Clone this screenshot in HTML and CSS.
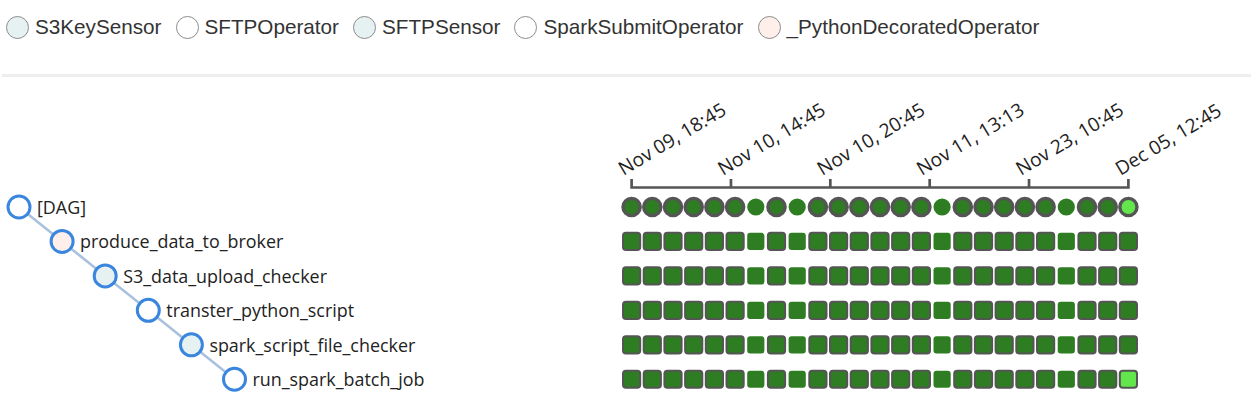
FILE: index.html
```html
<!DOCTYPE html>
<html lang="en">
<head>
  <meta charset="UTF-8">
  <title>Tree View</title>
  <link rel="stylesheet" href="styles.css">
</head>
<body>
  <div class="legend">
    <span class="legend-item"><span class="swatch sensor"></span>S3KeySensor</span>
    <span class="legend-item"><span class="swatch plain"></span>SFTPOperator</span>
    <span class="legend-item"><span class="swatch sensor"></span>SFTPSensor</span>
    <span class="legend-item"><span class="swatch plain"></span>SparkSubmitOperator</span>
    <span class="legend-item"><span class="swatch decorated"></span>_PythonDecoratedOperator</span>
  </div>
  <div class="divider"></div>

  <svg class="tree" width="1251" height="338">
    <g id="chart" transform="translate(0,-77)"></g>
  </svg>

  <script src="script.js"></script>
</body>
</html>
```

FILE: styles.css
```css
body {
  margin: 0;
  padding: 0;
  background: #fff;
  color: #333;
  font-family: "Liberation Sans", Arial, sans-serif;
}

.legend {
  display: flex;
  align-items: center;
  height: 24px;
  padding: 15px 6px 0 6px;
  margin-bottom: 35px;
  font-size: 20.7px;
  line-height: 24px;
  color: #333;
}

.legend-item {
  display: flex;
  align-items: center;
  margin-right: 14px;
}

.swatch {
  display: inline-block;
  box-sizing: border-box;
  width: 23px;
  height: 23px;
  margin-right: 6px;
  border: 1px solid #8c8c8c;
  border-radius: 50%;
  background: #fff;
}

.swatch.sensor { background: #e6f1f2; }
.swatch.decorated { background: #ffefeb; }

.divider {
  height: 3px;
  margin-left: 2px;
  background: #eeeeee;
}

.tree {
  display: block;
}

/* tree */
.link {
  fill: none;
  stroke: #a9c1de;
  stroke-width: 2.6;
}

.node {
  stroke: #3a86de;
  stroke-width: 3;
}

.node-label {
  font-family: "Open Sans", sans-serif;
  font-size: 17.9px;
  fill: #222;
  dominant-baseline: central;
}

/* axis */
.axis-line {
  fill: none;
  stroke: #555;
  stroke-width: 2.7;
}

.tick-label {
  font-family: "Open Sans", sans-serif;
  font-size: 19.2px;
  fill: #222;
}

/* runs and task instances */
.run, .ti {
  stroke: #555;
  stroke-width: 3.4;
}

.ti {
  stroke-width: 2;
}

.run.manual, .ti.manual {
  stroke-width: 0;
}

.success { fill: #2e7d22; }
.running { fill: #62e64c; }
```

FILE: script.js
```js
const NS = "http://www.w3.org/2000/svg";
const chart = document.getElementById("chart");

const tasks = [
  { name: "[DAG]", fill: "#fff" },
  { name: "produce_data_to_broker", fill: "#ffefeb" },
  { name: "S3_data_upload_checker", fill: "#e6f1f2" },
  { name: "transter_python_script", fill: "#fff" },
  { name: "spark_script_file_checker", fill: "#e6f1f2" },
  { name: "run_spark_batch_job", fill: "#fff" }
];

const dates = ["Nov 09, 18:45", "Nov 10, 14:45", "Nov 10, 20:45", "Nov 11, 13:13", "Nov 23, 10:45", "Dec 05, 12:45"];
const runCount = 25;
const manualRuns = [6, 8, 15, 21];

const colX = i => 631.6 + i * 20.7;
const rowY = i => 207 + i * 34.45;
const nodeX = i => 19 + i * 43.1;

function add(tag, attrs, text) {
  const el = document.createElementNS(NS, tag);
  for (const k in attrs) el.setAttribute(k, attrs[k]);
  if (text) el.textContent = text;
  chart.appendChild(el);
  return el;
}

// links between parent and child
for (let i = 1; i < tasks.length; i++) {
  add("line", { class: "link", x1: nodeX(i - 1), y1: rowY(i - 1), x2: nodeX(i), y2: rowY(i) });
}

// nodes + labels
tasks.forEach((t, i) => {
  add("circle", { class: "node", cx: nodeX(i), cy: rowY(i), r: 11, fill: t.fill });
  add("text", { class: "node-label", x: nodeX(i) + 18, y: rowY(i) }, t.name);
});

// axis
const axisStart = colX(0), axisEnd = colX(runCount - 1);
const step = (axisEnd - axisStart) / (dates.length - 1);
let d = `M${axisStart},179V187.5H${axisEnd}V179`;
for (let i = 1; i < dates.length - 1; i++) d += `M${axisStart + i * step},179V187.5`;
add("path", { class: "axis-line", d: d });
dates.forEach((label, i) => {
  const x = axisStart + i * step - 8;
  add("text", { class: "tick-label", transform: `translate(${x},176) rotate(-31)` }, label);
});

// dag runs and task instances
for (let c = 0; c < runCount; c++) {
  const manual = manualRuns.includes(c) ? " manual" : "";
  const state = c === runCount - 1 ? "running" : "success";
  add("circle", { class: `run ${state}${manual}`, cx: colX(c), cy: rowY(0), r: 8.6 });
  for (let r = 1; r < tasks.length; r++) {
    const tiState = c === runCount - 1 && r === tasks.length - 1 ? "running" : "success";
    add("rect", {
      class: `ti ${tiState}${manual}`,
      x: colX(c) - 8.6, y: rowY(r) - 8.6,
      width: 17.2, height: 17.2, rx: 3
    });
  }
}
```
